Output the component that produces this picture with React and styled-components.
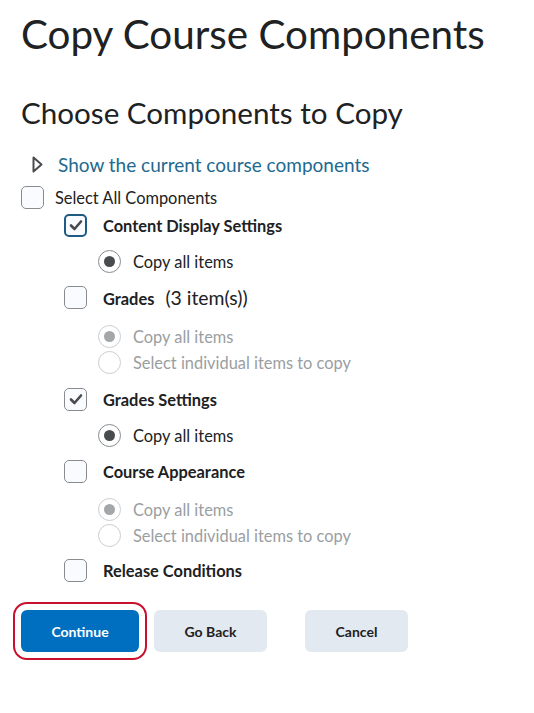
import React from "react";
import styled, { createGlobalStyle, css } from "styled-components";

const Global = createGlobalStyle`
  html, body { margin: 0; padding: 0; background: #fff; }
  body { font-family: Lato, "Noto Sans", sans-serif; color: #202122; }
  * { box-sizing: border-box; }
`;

const Page = styled.div`
  padding: 0 0 48px 21px;
  width: 534px;
`;

const Title = styled.h1`
  margin: 0;
  padding-top: 8px;
  font-size: 40.4px;
  font-weight: 400;
  line-height: 52px;
  color: #202122;
`;

const Subtitle = styled.h2`
  margin: 0;
  padding-top: 34px;
  font-size: 29.6px;
  font-weight: 400;
  line-height: 38px;
  color: #202122;
`;

const Toggle = styled.div`
  display: flex;
  align-items: center;
  height: 28px;
  margin-top: 18px;
  padding-left: 11px;
  gap: 15px;
`;

const Link = styled.a`
  font-size: 19px;
  color: #22698f;
  text-decoration: none;
`;

const Row = styled.div`
  display: flex;
  align-items: center;
  height: 24px;
  margin-top: ${(p) => p.$mt || 0}px;
  padding-left: ${(p) => p.$indent || 0}px;
  gap: ${(p) => p.$gap || 16}px;
`;

const Box = styled.span`
  flex: none;
  width: 23px;
  height: 23px;
  border-radius: 5px;
  background: #f9fbff;
  border: 1px solid #868c8f;
  display: flex;
  align-items: center;
  justify-content: center;
  ${(p) =>
    p.$focus &&
    css`
      border: 2px solid #1d5b85;
    `}
`;

const Radio = styled.span`
  flex: none;
  width: 23px;
  height: 23px;
  border-radius: 50%;
  background: #fff;
  border: 1px solid ${(p) => (p.$disabled ? "#c9ced2" : "#868c8f")};
  display: flex;
  align-items: center;
  justify-content: center;
  &::after {
    content: "";
    display: ${(p) => (p.$checked ? "block" : "none")};
    width: 11px;
    height: 11px;
    border-radius: 50%;
    background: ${(p) => (p.$disabled ? "#a3a7aa" : "#494c4e")};
  }
`;

const Label = styled.span`
  font-size: 16.4px;
  font-weight: ${(p) => (p.$bold ? 700 : 400)};
  color: ${(p) => (p.$disabled ? "#9a9ea1" : "#202122")};
  white-space: nowrap;
`;

const Count = styled.span`
  font-size: 19.4px;
  font-weight: 400;
  margin-left: 11px;
`;

const Actions = styled.div`
  display: flex;
  align-items: center;
  margin-top: 28px;
  gap: 15px;
`;

const Button = styled.button`
  height: 42px;
  width: ${(p) => p.$w}px;
  margin-left: ${(p) => p.$ml || 0}px;
  border: none;
  border-radius: 6px;
  font-family: Lato, "Noto Sans", sans-serif;
  font-size: 14px;
  font-weight: 700;
  background: ${(p) => (p.$primary ? "#006fbf" : "#e3e9f1")};
  color: ${(p) => (p.$primary ? "#fff" : "#202122")};
  ${(p) =>
    p.$primary &&
    css`
      outline: 2px solid #c8102e;
      outline-offset: 6px;
    `}
`;

const Check = () => (
  <svg width="14" height="12" viewBox="0 0 14 12">
    <path d="M2 6.5 L5.5 10 L12 2.5" fill="none" stroke="#494c4e" strokeWidth="2.6" strokeLinecap="round" strokeLinejoin="round" />
  </svg>
);

const Triangle = () => (
  <svg width="11" height="17" viewBox="0 0 11 17">
    <path d="M1.5 1.5 L9.5 8.5 L1.5 15.5 Z" fill="none" stroke="#494c4e" strokeWidth="2" strokeLinejoin="round" />
  </svg>
);

const Component = ({ name, count, checked, focus, disabled, mt, radioMt = 12 }) => (
  <>
    <Row $indent={43} $mt={mt}>
      <Box $focus={focus}>{checked && <Check />}</Box>
      <Label $bold>
        {name}
        {count && <Count>{count}</Count>}
      </Label>
    </Row>
    <Row $indent={77} $gap={12} $mt={radioMt}>
      <Radio $checked $disabled={disabled} />
      <Label $disabled={disabled}>Copy all items</Label>
    </Row>
    {disabled && (
      <Row $indent={77} $gap={12} $mt={2}>
        <Radio $disabled />
        <Label $disabled>Select individual items to copy</Label>
      </Row>
    )}
  </>
);

export default function App() {
  return (
    <Page>
      <Global />
      <Title>Copy Course Components</Title>
      <Subtitle>Choose Components to Copy</Subtitle>
      <Toggle>
        <Triangle />
        <Link href="#">Show the current course components</Link>
      </Toggle>
      <Row $gap={11} $mt={7}>
        <Box />
        <Label>Select All Components</Label>
      </Row>
      <Component name="Content Display Settings" checked focus mt={4} />
      <Component name="Grades" count="(3 item(s))" disabled mt={12} radioMt={15} />
      <Component name="Grades Settings" checked mt={13} />
      <Component name="Course Appearance" disabled mt={12} radioMt={14} />
      <Row $indent={43} $mt={11}>
        <Box />
        <Label $bold>Release Conditions</Label>
      </Row>
      <Actions>
        <Button $primary $w={118}>Continue</Button>
        <Button $w={113}>Go Back</Button>
        <Button $w={103} $ml={23}>Cancel</Button>
      </Actions>
    </Page>
  );
}
